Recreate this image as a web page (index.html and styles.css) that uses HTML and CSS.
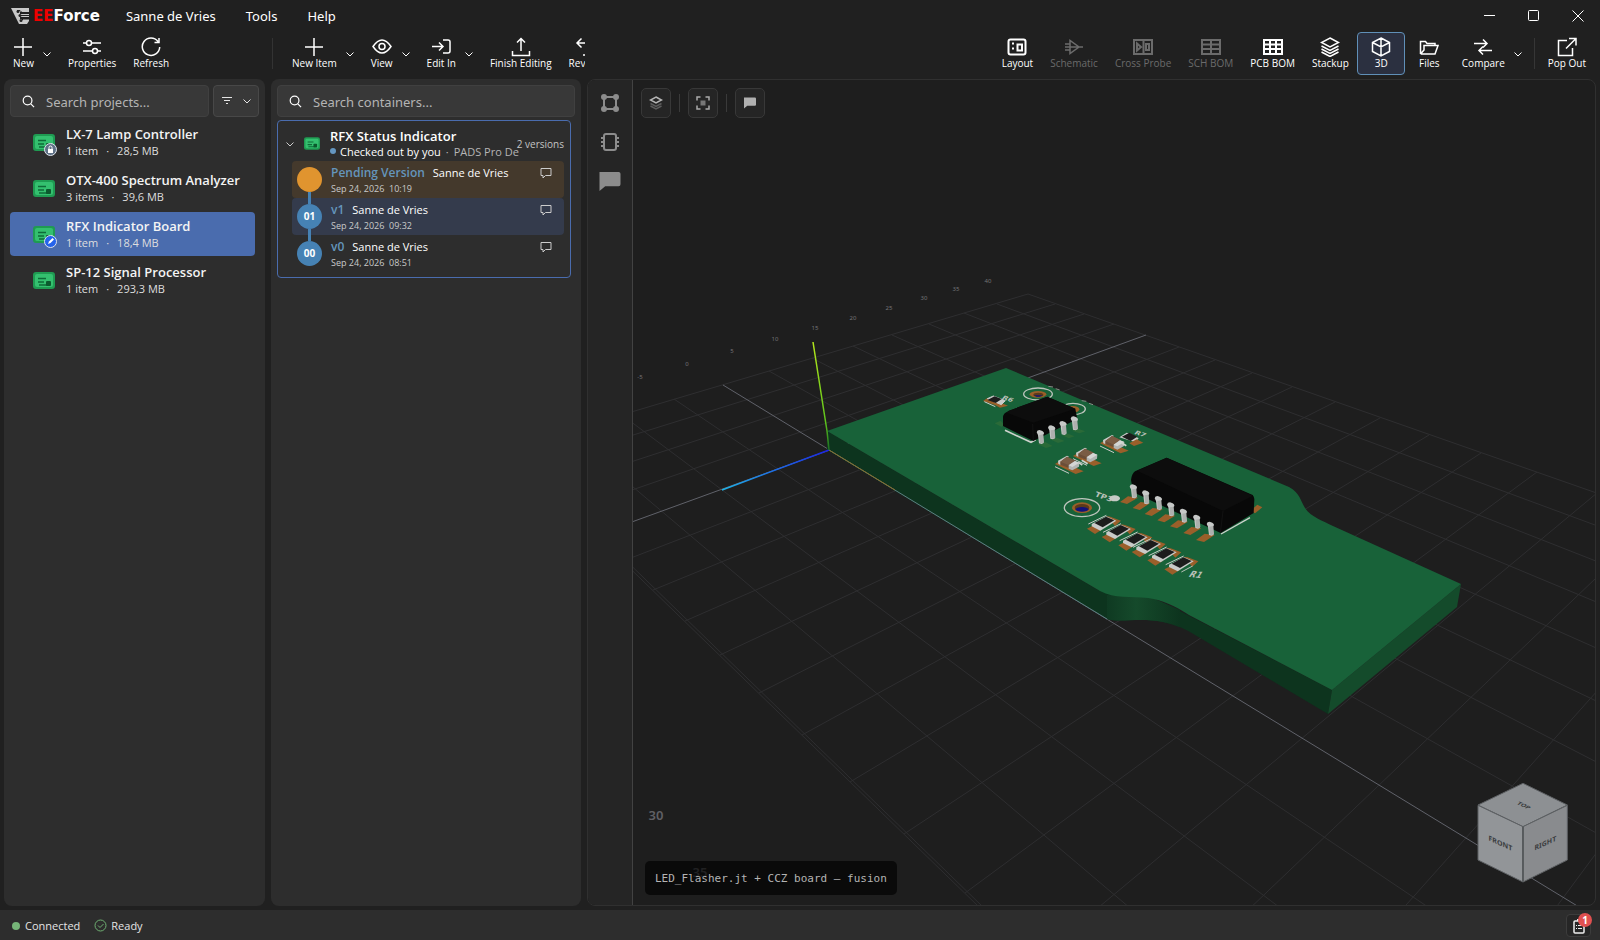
FILE: index.html
```html
<!DOCTYPE html>
<html lang="en">
<head>
<meta charset="utf-8">
<title>EEForce</title>
<link rel="stylesheet" href="styles.css">
</head>
<body>
<svg class="defs" aria-hidden="true">
  <symbol id="plus" viewBox="0 0 20 20"><path d="M10 1v18M1 10h18"/></symbol>
  <symbol id="chevron" viewBox="0 0 10 10"><path d="M1.500 3.500 5 7l3.500-3.500"/></symbol>
  <symbol id="search" viewBox="0 0 14 14"><circle cx="6" cy="6" r="4.700"/><path d="m9.500 9.500 3.500 3.500"/></symbol>
  <symbol id="comment" viewBox="0 0 12 12"><path d="M1 1.500h10v7H5.500L3 11V8.500H1z"/></symbol>
  <symbol id="comment-solid" viewBox="0 0 22 22"><path d="M2 1h18q2 0 2 2v11q0 2-2 2H6l-6 5V1z"/></symbol>
  <symbol id="board" viewBox="0 0 22 17"><rect width="22" height="17" rx="3" fill="#1f9b52"/><rect x="2" y="2" width="18" height="13" rx="2" fill="#34c06f"/><path d="M5 6.500h8M5 10h6M6 13h8" stroke="#0e6b38" stroke-width="1.500"/><rect x="13" y="9" width="5" height="5" rx="1" fill="#0b5a2e"/></symbol>
  <symbol id="layers" viewBox="0 0 20 20"><path d="m10 1 8.500 4.500L10 10 1.500 5.500zM1.500 9l8.500 4.500L18.500 9M1.500 12l8.500 4.500 8.500-4.500M1.500 15l8.500 4.500 8.500-4.500"/></symbol>
</svg>

<header class="titlebar">
  <div class="brand">
    <svg width="20" height="18" viewBox="0 0 20 18"><path d="M0 1h18v4H9v2h9v3H9v2h9v2l-2 3H8z" fill="#c8c8c8"/><path d="M6 3.500h3l2 2h7M9 8.500h9M10 14l2-2h6" stroke="#222" fill="none"/><circle cx="7" cy="4.500" r="1.500" fill="#222"/><circle cx="9" cy="8.500" r="1.500" fill="#222"/><circle cx="10" cy="13.500" r="1.500" fill="#222"/></svg>
    <span class="brand-name"><b>EE</b>Force</span>
  </div>
  <nav class="menu"><button>Sanne de Vries</button><button>Tools</button><button>Help</button></nav>
  <div class="window-controls">
    <button aria-label="Minimize"><svg width="12" height="12" viewBox="0 0 12 12"><path d="M0 5.500h11"/></svg></button>
    <button aria-label="Maximize"><svg width="12" height="12" viewBox="0 0 12 12"><rect x=".5" y=".5" width="10" height="10" rx="1"/></svg></button>
    <button aria-label="Close"><svg width="12" height="12" viewBox="0 0 12 12"><path d="m.5.5 11 11m0-11-11 11"/></svg></button>
  </div>
</header>

<div class="toolbar">
  <div class="tools tools-projects">
    <div class="split"><button class="tool"><svg class="icon"><use href="#plus"/></svg>New</button><button class="more" aria-label="New options"><svg><use href="#chevron"/></svg></button></div>
    <button class="tool"><svg class="icon" viewBox="0 0 20 20"><path d="M1 6h3.500m5 0H19M1 14h9.500m5 0H19"/><circle cx="7" cy="6" r="2.500"/><circle cx="13" cy="14" r="2.500"/></svg>Properties</button>
    <button class="tool"><svg class="icon" viewBox="0 0 20 20"><path d="M17 4.500A8.700 8.700 0 1 0 18.700 10M18 1v4.500h-4.500"/></svg>Refresh</button>
  </div>
  <div class="tools tools-items">
    <div class="split"><button class="tool"><svg class="icon"><use href="#plus"/></svg>New Item</button><button class="more" aria-label="New item options"><svg><use href="#chevron"/></svg></button></div>
    <div class="split"><button class="tool"><svg class="icon" viewBox="0 0 20 20"><path d="M1 9.500Q10-3.500 19 9.500 10 22.500 1 9.500z"/><circle cx="10" cy="9.500" r="3"/></svg>View</button><button class="more" aria-label="View options"><svg><use href="#chevron"/></svg></button></div>
    <div class="split"><button class="tool"><svg class="icon" viewBox="0 0 20 20"><path d="M1 9.500h11M8 5.500l4 4-4 4M12 3h5q2 0 2 2v9q0 2-2 2h-5"/></svg>Edit In</button><button class="more" aria-label="Edit options"><svg><use href="#chevron"/></svg></button></div>
    <button class="tool"><svg class="icon" viewBox="0 0 20 20"><path d="M10 14V1.500M6 5.500l4-4 4 4M1.500 14v4.500h17V14"/></svg>Finish Editing</button>
    <button class="tool"><svg class="icon" viewBox="0 0 20 20"><path d="M17 6H3m4.500-4.500L3 6l4.500 4.500M9 18h7"/></svg>Revert</button>
  </div>
  <div class="tools tools-views">
    <button class="tool"><svg class="icon bold" viewBox="0 0 20 20"><rect x="1.500" y="2.500" width="17" height="15" rx="2"/><rect x="10.500" y="7.500" width="4.500" height="6"/><path d="M5 6.500h2M5 11.500h2"/></svg>Layout</button>
    <button class="tool" disabled><svg class="icon" viewBox="0 0 20 20"><path d="M6 3.500v13L15 10zM1 7h5M1 13h5M1 10h18"/></svg>Schematic</button>
    <button class="tool" disabled><svg class="icon bold" viewBox="0 0 20 20"><path d="M1 3h18v14H1zM10.500 3v14M4 6.500v7L8 10z"/><rect x="13" y="7" width="3" height="6"/></svg>Cross Probe</button>
    <button class="tool" disabled><svg class="icon bold" viewBox="0 0 20 20"><path d="M1 3h18v14H1zM1 7.500h18M1 12h18M10 3v14"/></svg>SCH BOM</button>
    <button class="tool"><svg class="icon bold" viewBox="0 0 20 20"><path d="M1 3h18v14H1zM1 7.500h18M1 12h18M7 3v14M13 3v14"/></svg>PCB BOM</button>
    <button class="tool"><svg class="icon"><use href="#layers"/></svg>Stackup</button>
    <button class="tool selected" aria-pressed="true"><svg class="icon" viewBox="0 0 20 20"><path d="m10 1 8.500 4.500v9L10 19l-8.500-4.500v-9zM1.500 5.500 10 10l8.500-4.500M10 10v9M10 1v9"/></svg>3D</button>
    <button class="tool"><svg class="icon" viewBox="0 0 20 20"><path d="M1.500 17V4.500h5l1.500 2h8v2M1.500 17H16l3-8.500H16V6.500M1.500 17 5 13V8.500h14"/></svg>Files</button>
    <div class="split"><button class="tool"><svg class="icon" viewBox="0 0 20 20"><path d="M1 6.500h13M10 2.500l4 4-4 4M19 13.500H6m4-4-4 4 4 4"/></svg>Compare</button><button class="more" aria-label="Compare options"><svg><use href="#chevron"/></svg></button></div>
    <span class="rule"></span>
    <button class="tool"><svg class="icon" viewBox="0 0 20 20"><path d="M10 3.500H1.500v15h14V11M12 1.500h7v7M19 1.500 9 11.500"/></svg>Pop Out</button>
  </div>
</div>

<main class="workspace">
  <section class="panel" aria-label="Projects">
    <div class="search-row">
      <label class="search"><svg><use href="#search"/></svg><input type="search" placeholder="Search projects..." aria-label="Search projects"></label>
      <button class="filter" aria-label="Filter"><svg width="12" height="12" viewBox="0 0 12 12"><path d="M1 2.500h10M3 5.500h6M5 8.500h2"/></svg><svg width="10" height="10"><use href="#chevron"/></svg></button>
    </div>
    <ul class="projects">
      <li><button class="project"><span class="project-icon"><svg width="22" height="17"><use href="#board"/></svg><svg class="mark" width="13" height="13" viewBox="0 0 13 13"><circle cx="6.500" cy="6.500" r="6" fill="#5f7186" stroke="#dfe5ec"/><rect x="4" y="6" width="5" height="4" fill="#fff"/><path d="M5 6V4.500a1.500 1.500 0 0 1 3 0V6" stroke="#fff" fill="none"/></svg></span><span><strong>LX-7 Lamp Controller</strong><small>1 item<i>·</i>28,5 MB</small></span></button></li>
      <li><button class="project"><span class="project-icon"><svg width="22" height="17"><use href="#board"/></svg></span><span><strong>OTX-400 Spectrum Analyzer</strong><small>3 items<i>·</i>39,6 MB</small></span></button></li>
      <li><button class="project current"><span class="project-icon"><svg width="22" height="17"><use href="#board"/></svg><svg class="mark" width="13" height="13" viewBox="0 0 13 13"><circle cx="6.500" cy="6.500" r="6" fill="#2563eb" stroke="#dfe5ec"/><path d="m4 9 1-2.500L8.500 3 10 4.500 6.500 8z" fill="#fff"/></svg></span><span><strong>RFX Indicator Board</strong><small>1 item<i>·</i>18,4 MB</small></span></button></li>
      <li><button class="project"><span class="project-icon"><svg width="22" height="17"><use href="#board"/></svg></span><span><strong>SP-12 Signal Processor</strong><small>1 item<i>·</i>293,3 MB</small></span></button></li>
    </ul>
  </section>

  <section class="panel" aria-label="Containers">
    <label class="search"><svg><use href="#search"/></svg><input type="search" placeholder="Search containers..." aria-label="Search containers"></label>
    <article class="container-card">
      <header>
        <button class="collapse" aria-label="Collapse"><svg width="10" height="10"><use href="#chevron"/></svg></button>
        <svg width="16" height="13"><use href="#board"/></svg>
        <div class="container-text"><h2>RFX Status Indicator</h2><p><span class="dot"></span>Checked out by you<em>·</em><em>PADS Pro Designer</em></p></div>
        <span class="count">2 versions</span>
      </header>
      <ol class="versions">
        <li class="pending"><span class="node"></span><div><p><b>Pending Version</b>Sanne de Vries</p><time>Sep 24, 2026&nbsp; 10:19</time></div><button aria-label="Comments"><svg width="12" height="12"><use href="#comment"/></svg></button></li>
        <li class="active"><span class="node">01</span><div><p><b>v1</b>Sanne de Vries</p><time>Sep 24, 2026&nbsp; 09:32</time></div><button aria-label="Comments"><svg width="12" height="12"><use href="#comment"/></svg></button></li>
        <li><span class="node">00</span><div><p><b>v0</b>Sanne de Vries</p><time>Sep 24, 2026&nbsp; 08:51</time></div><button aria-label="Comments"><svg width="12" height="12"><use href="#comment"/></svg></button></li>
      </ol>
    </article>
  </section>

  <section class="viewer" aria-label="3D view">
    <nav class="rail">
      <button aria-label="Nets"><svg width="20" height="20" viewBox="0 0 20 20"><path d="M4 4h12v12H4z" fill="none" stroke="#8c8c8c" stroke-width="2"/><g fill="#8c8c8c"><circle cx="4" cy="4" r="3"/><circle cx="16" cy="4" r="3"/><circle cx="4" cy="16" r="3"/><circle cx="16" cy="16" r="3"/></g></svg></button>
      <button aria-label="Components"><svg width="20" height="20" viewBox="0 0 20 20"><g fill="none" stroke="#8c8c8c" stroke-width="2"><rect x="4" y="2" width="12" height="16" rx="2"/><path d="M1 6h3M1 10h3M1 14h3M16 6h3M16 10h3M16 14h3"/></g></svg></button>
      <button aria-label="Comments"><svg width="22" height="21" fill="#8c8c8c"><use href="#comment-solid"/></svg></button>
    </nav>
    <div class="viewport">
      <svg class="scene" viewBox="633 80 962 825" preserveAspectRatio="xMidYMid slice" role="img" aria-label="Circuit board in perspective">
        <g fill="none" stroke="#2e2e30">
          <path d="M1028 294 1808 567M997 304 1787 596M964 313 1764 627M929 324 1738 661M892 335 1711 699M853 346 1680 741M812 358 1645 787M769 371 1607 839M674 399 1514 965M622 415 1458 1041M567 431 1392 1130M507 449 1316 1234M511 449 1320 1234"/>
          <path d="M1028 294 507 449M1055 304 527 468M1084 314 548 489M1114 324 571 511M1179 347 623 561M1215 360 653 590M1252 373 685 621M1292 387 720 655M1335 402 759 693M1380 418 802 735M1429 435 850 782M1481 453 904 834M1537 472 965 893M1597 493 1034 961M1661 516 1114 1038M1731 541 1207 1128M1808 567 1315 1233"/>
        </g>
        <path d="M723 385 1620 932M1146 335 596 535" fill="none" stroke="#60626a"/>
        <g class="ticks">
          <text x="640" y="379">-5</text><text x="687" y="366">0</text><text x="732" y="353">5</text><text x="775" y="341">10</text><text x="815" y="330">15</text><text x="853" y="320">20</text><text x="889" y="310">25</text><text x="924" y="300">30</text><text x="956" y="291">35</text><text x="988" y="283">40</text>
          <text class="near" x="656" y="820">30</text><text class="near" x="700" y="877">35</text>
        </g>
        <path d="M827 431v19L1107 619C1120 623 1140 617 1163 622 1175 625 1183 628 1190 632L1328 714 1332 690 1178 610 1098 590z" fill="#0d341e"/>
        <path d="M1107 595v24C1120 623 1140 617 1163 622 1170 623 1175 625 1180 627V610L1148 596z" fill="url(#bend)"/>
        <path d="m1332 690-4 24 129-107 4-23z" fill="#144b2b"/>
        <path d="M827 431 1006 368 1289 487C1300 493 1300 500 1305 508 1311 517 1323 521 1333 526L1461 584 1332 690 1189 615C1175 606 1163 600 1148 598 1130 596 1115 599 1100 591z" fill="#186239"/>
        <path d="M829 450 1107 619" stroke="#5d7f82" fill="none"/>
        <path d="m829 450 66 40" stroke="#8a6a28" fill="none"/>
        <path d="m829 450-107 40" stroke="url(#blue)" stroke-width="1.500"/>
        <path d="m813 342 14 89 2 19" stroke="url(#lime)" fill="none" stroke-width="1.500"/>
        <defs>
          <linearGradient id="bend"><stop stop-color="#0f3a22"/><stop offset=".4" stop-color="#154a2b"/><stop offset="1" stop-color="#0d341e"/></linearGradient>
          <linearGradient id="blue" x1="1" x2="0"><stop stop-color="#1a22e6"/><stop offset="1" stop-color="#1cb4e8"/></linearGradient>
          <linearGradient id="lime" x1="0" x2="0" y1="0" y2="1"><stop stop-color="#b4e61c"/><stop offset=".75" stop-color="#5cc41c"/><stop offset="1" stop-color="#1d6a22"/></linearGradient>
          <g id="res"><path d="m-50 18 20-10 26 12-22 14zM8-20l12 2 32 12-18 16z" fill="#9a5f2a"/><path d="m-46 4 54-26" stroke="#c9cbc9" stroke-width="3"/><path d="M-36 4 8-19l30 13-48 30-26-13z" fill="#c9cbc9"/><path d="m-28 1 35-19 25 11-35 21z" fill="#1c1c1c"/></g>
          <g id="cap"><path d="m-38 4 16-10 70 32-24 8zM-38 4l10-6 10 8z" fill="#9a5f2a"/><path d="m-38 12 42 20" stroke="#c9cbc9" stroke-width="3"/><path d="m-29-6 27-15 6 3-25 15V7l-7-3z" fill="#c6c8c6"/><path d="m-22-3 20-15L24-6 4 8v8L-22 6z" fill="#6b4e38"/><path d="m-22-3 20-15L24-6 4 8z" fill="#7a5c44"/><path d="m3 8 19-13 13 5-1 12-20 11-11-5z" fill="#b2b5b3"/><path d="m3 8 19-13 13 5-21 13z" fill="#d4d6d4"/></g>
          <g id="pin"><path d="M-11-8q1-7 9-7l8 3q6 3 5 8l-4 5 3 23-6 3-8-2-3-25z" fill="#c6c8c7"/><path d="M-3 0 9-2l2 24-6 3-7-2z" fill="#adb0ae"/></g>
        </defs>
        <svg x="960" y="350" width="340" height="240" viewBox="0 0 1020 720">
          <g fill="none" stroke="#bcc4bc" stroke-width="4"><ellipse cx="234" cy="132" rx="43" ry="18"/><ellipse cx="339" cy="177" rx="37" ry="17"/><ellipse cx="366" cy="473" rx="53" ry="27"/></g>
          <ellipse cx="234" cy="133" rx="25" ry="10" fill="#9a5f2a"/><ellipse cx="235" cy="134" rx="15" ry="6" fill="#5b3a1a"/><path d="M222 136h26l-10 4h-8z" fill="#12127a"/>
          <ellipse cx="339" cy="178" rx="19" ry="10" fill="#9a5f2a"/>
          <ellipse cx="366" cy="473" rx="30" ry="16" fill="#9a5f2a"/><ellipse cx="366" cy="473" rx="22" ry="11" fill="#5b3a1a"/><ellipse cx="366" cy="478" rx="19" ry="7" fill="#12127a"/>
          <path d="m265 109 14 2m8 5 12 4M365 152l14 2m8 6 12 4" stroke="#858b85" stroke-width="3"/>
          <path d="m69 153 12-8 20 4 43 18-24 6-15-8z" fill="#9a5f2a"/><path d="m73 155 33 15M82 146l18-8 36 14-12 12z" stroke="#c9cbc9" stroke-width="3" fill="#c9cbc9"/><path d="m82 150 22-11 21 8-18 12z" fill="#1c1c1c"/>
          <text class="silk" transform="matrix(.9 .3 -.5 .6 124 146)">R6</text>
          <path d="m104 220 18-8 12 14-10 4zM232 282l24-6 22 12-20 6zm38-14 20-5 24 10-20 6zm36-12 18-5 20 8-18 6zm30-14 18-6 22 8-18 6z" fill="#2a6a38"/>
          <path d="M135 241 213 277l14-8" stroke="#cdd2cd" stroke-width="5" fill="none"/>
          <path d="M129 200q0-10 18-18l115-42 84 36 6 31-132 66-91-45z" fill="#080808"/><path d="M147 182 262 140l84 36-126 42-80-30z" fill="#0d0d0d"/><path d="m218 222 2 50" stroke="#161616" stroke-width="2"/>
          <use href="#pin" x="241" y="255"/><use href="#pin" x="275" y="241"/><use href="#pin" x="309" y="228"/><use href="#pin" x="343" y="214"/>
          <path d="m478 262 22-14 10 3 26 14-10 12z" fill="#c9cbc9"/><path d="m508 280 14 8 28-10-20-10z" fill="#9a5f2a"/><path d="m486 260 22-12 24 12-20 13z" fill="#1c1c1c"/>
          <use href="#cap" x="377" y="314"/><use href="#cap" x="323" y="338"/><use href="#cap" x="458" y="276"/>
          <path d="m355 337 12 8m-2-14 18 10M485 279l14 8" stroke="#cdd2cd" stroke-width="5"/>
          <text class="silk" transform="matrix(.9 .3 -.5 .6 521 251)">R7</text>
          <text class="silk" transform="matrix(1 .36 -.4 .8 403 438)">TP3</text><ellipse cx="464" cy="445" rx="16" ry="9" fill="#c5cac5"/>
          <path d="M783 552 870 503" stroke="#cdd2cd" stroke-width="4"/><path d="m872 482 20-18 15 8-22 18z" fill="#9a5f2a"/>
          <path d="M513 390q2-18 12-26l95-41 258 112q4 4 5 12l-2 42-99 60-262-122z" fill="#080808"/><path d="M531 362 620 323l259 114-90 46z" fill="#0d0d0d"/><path d="m789 483-8 66" stroke="#171717" stroke-width="2"/>
          <path d="m480 456 24-17 30 4-33 19zm38 18 24-18 28 4-31 20zm36 18 24-18 30 4-33 20zm38 19 24-18 30 4-33 20zm38 18 24-18 30 4-33 20zm40 20 24-18 30 4-33 20zm38 21 26-19 30 4-32 21z" fill="#9a5f2a"/>
          <use href="#pin" x="520" y="418"/><use href="#pin" x="557" y="436"/><use href="#pin" x="595" y="453"/><use href="#pin" x="632" y="472"/><use href="#pin" x="670" y="491"/><use href="#pin" x="710" y="509"/><use href="#pin" x="751" y="530"/>
          <use href="#res" x="431" y="518"/><use href="#res" x="475" y="543"/><use href="#res" x="525" y="568"/><use href="#res" x="565" y="588"/><use href="#res" x="612" y="613"/><use href="#res" x="663" y="640"/>
          <path d="m664 666 34-18" stroke="#b8c0b8" stroke-width="3"/>
          <text class="silk large" transform="matrix(.9 .1 -.6 .9 684 680)">R1</text>
        </svg>
      </svg>

      <div class="view-tools">
        <button aria-label="Layers"><svg width="14" height="14" viewBox="0 0 14 14" fill="none" stroke-width="1.500"><path d="m1.500 7.500 5.500 3 5.500-3M1.500 10l5.500 3 5.500-3" stroke="#5c5c5c"/><path d="m7 1 5.500 3L7 7 1.500 4z" stroke="#b4b4b4"/></svg></button><span></span>
        <button aria-label="Fit to view"><svg width="14" height="14" viewBox="0 0 14 14"><path d="M1 4.500V1h3.500m5 0H13v3.500m0 5V13H9.500m-5 0H1V9.500" fill="none" stroke="#aaa" stroke-width="1.500"/><rect x="4.500" y="4.500" width="5" height="5" fill="#777"/></svg></button><span></span>
        <button aria-label="Comments"><svg width="12" height="12" fill="#b0b0b0"><use href="#comment-solid"/></svg></button>
      </div>
      <p class="caption">LED_Flasher.jt + CCZ board — fusion</p>
      <svg class="cube" width="92" height="102" viewBox="112 68 276 304" role="img" aria-label="Orientation cube">
        <g stroke="#5d6063" stroke-width="3" stroke-linejoin="round"><path d="m250 71 133 65-133 65-135-65z" fill="#8d9093"/><path d="m115 137 135 64v166l-135-66z" fill="#929598"/><path d="m383 137-133 64v166l133-66z" fill="#898b8e"/></g>
        <path d="M250 201v164" stroke="#54575a" stroke-width="5"/>
        <g class="cube-face"><text transform="matrix(1 .45 0 1 182 258)">FRONT</text><text transform="matrix(1 -.45 0 1 317 258)">RIGHT</text><text class="top" transform="matrix(.9 .4 -.6 .5 248 141)">TOP</text></g>
      </svg>
    </div>
  </section>
</main>

<footer class="status">
  <span class="online"></span><span>Connected</span>
  <svg width="13" height="13" viewBox="0 0 13 13"><circle cx="6.500" cy="6.500" r="5.500"/><path d="m4 6.500 2 2 3.500-3.500"/></svg><span>Ready</span>
  <button aria-label="Tasks, 1 new"><svg width="14" height="16" viewBox="0 0 14 16"><rect x="2" y="3" width="10" height="12" rx="1" fill="none" stroke="#eee" stroke-width="1.500"/><path d="M5 2h4" stroke="#eee" stroke-width="2"/><path d="M4 7.500h1m1 0h4M4 10.500h1m1 0h4" stroke="#eee"/></svg><span class="badge">1</span></button>
</footer>
</body>
</html>
```
FILE: styles.css
```css
* { box-sizing: border-box; }
body {
  margin: 0;
  height: 100vh;
  display: flex;
  flex-direction: column;
  overflow: hidden;
  background: #202020;
  color: #fff;
  font: 12px/16px "Open Sans", "Noto Sans", sans-serif;
}
button { border: 0; padding: 0; background: none; color: inherit; font: inherit; }
svg { display: block; flex: none; }
ul, ol, p, h2 { margin: 0; padding: 0; list-style: none; }
.defs { position: absolute; width: 0; height: 0; }

.titlebar { display: flex; align-items: center; height: 32px; padding-left: 11px; }
.brand { display: flex; align-items: center; gap: 2px; }
.brand-name { font: 700 15px/20px "DejaVu Sans", sans-serif; }
.brand-name b { color: #f00000; }
.menu { display: flex; gap: 30px; margin-left: 26px; font: 13px/20px "Noto Sans", sans-serif; }
.window-controls { display: flex; margin-left: auto; }
.window-controls button { width: 44px; height: 32px; display: grid; place-items: center; }
.window-controls svg { fill: none; stroke: #fff; }

.toolbar { display: grid; grid-template-columns: 272px 313px minmax(0, 1fr); height: 47px; padding-bottom: 4px; }
.tools { display: flex; align-items: center; overflow: hidden; }
.tools-projects { padding-left: 4px; }
.tools-items { position: relative; padding-left: 11px; }
.tools-items::before { content: ""; position: absolute; left: 0; top: 6px; width: 1px; height: 31px; background: #333; }
.tools-views { justify-content: flex-end; padding-right: 6px; }
.tool {
  flex: none;
  display: flex;
  flex-direction: column;
  align-items: center;
  justify-content: center;
  min-width: 38px;
  height: 43px;
  padding: 0 7px 0 8px;
  border: 1px solid transparent;
  border-radius: 4px;
  font-size: 10px;
  line-height: 13px;
  white-space: nowrap;
}
.tools-views > .tool { min-width: 48px; }
.tool:disabled { color: #6b6b6b; }
.tool.selected { background: #2b3040; border-color: #6090b8; }
.icon { width: 20px; height: 20px; fill: none; stroke: currentColor; stroke-width: 1.5; }
.icon.bold { stroke-width: 2; }
.split { display: flex; flex: none; }
.split .tool { padding-right: 0; min-width: 0; }
.more { width: 24px; display: grid; place-items: center; }
.more svg { width: 10px; height: 10px; fill: none; stroke: #fff; }
.rule { width: 1px; height: 31px; margin: 0 4px; background: #363636; }

.workspace { flex: 1; min-height: 0; display: grid; grid-template-columns: 261px 310px minmax(0, 1fr); gap: 6px; padding: 0 4px 4px; }
.panel { min-width: 0; padding: 6px; border-radius: 8px; background: #2d2d2d; }
.search-row { display: flex; gap: 4px; }
.search { flex: 1; min-width: 0; display: flex; align-items: center; gap: 11px; height: 32px; padding: 0 11px; border: 1px solid #404040; border-radius: 4px; background: #383838; }
.search svg { width: 13px; height: 13px; fill: none; stroke: #fff; stroke-width: 1.3; }
.search input { flex: 1; min-width: 0; padding: 2px 0 0; border: 0; outline: 0; background: none; color: #fff; font: 13px/20px "Noto Sans", sans-serif; }
.search input::placeholder { color: #b4b4b4; opacity: 1; }
.filter { flex: none; display: flex; align-items: center; justify-content: center; gap: 9px; width: 46px; border: 1px solid #484848; border-radius: 4px; background: #383838; }
.filter svg { fill: none; stroke: #e4e4e4; }

.projects { display: grid; gap: 2px; margin-top: 3px; padding-right: 4px; }
.project { display: flex; gap: 11px; align-items: center; width: 100%; height: 44px; padding-left: 23px; border-radius: 4px; text-align: left; }
.project.current { background: #4a6cae; }
.project-icon { position: relative; }
.mark { position: absolute; right: -2px; bottom: -5px; }
.project strong { display: block; font-size: 13px; line-height: 17px; font-weight: 600; color: #f4f4f4; }
.project small { display: block; font-size: 11px; line-height: 16px; color: #dedede; }
.project i { margin: 0 8px; font-style: normal; }

.container-card { margin: 3px 4px 0 0; padding: 5px 6px; border: 1px solid #4a6cae; border-radius: 4px; }
.container-card header { display: flex; align-items: center; height: 35px; }
.collapse { width: 12px; margin-right: 8px; display: grid; place-items: center; }
.collapse svg { fill: none; stroke: #ccc; }
.container-text { flex: 1; min-width: 0; margin-left: 10px; overflow: hidden; white-space: nowrap; }
.container-text h2 { font-size: 13px; line-height: 16px; font-weight: 600; }
.container-text p { font-size: 11px; line-height: 16px; }
.container-text em { font-style: normal; color: #b5b5b5; margin-left: 5px; }
.dot { display: inline-block; width: 6px; height: 6px; margin-right: 4px; border-radius: 50%; background: #6496c0; vertical-align: 2px; }
.count { margin-left: -2px; font-size: 10px; color: #c4c4c4; }
.versions { margin-left: 8px; }
.versions li { display: flex; align-items: center; gap: 9px; height: 37px; padding: 0 12px 0 5px; border-radius: 4px; }
.versions div { flex: 1; padding-top: 2px; white-space: nowrap; }
.versions p { font-size: 11px; line-height: 16px; }
.versions b { margin-right: 8px; font-size: 12px; font-weight: 600; color: #6495bb; }
.versions time { display: block; font-size: 9px; line-height: 15px; color: #cacaca; }
.versions li > button { align-self: flex-start; margin-top: 6px; }
.versions svg { fill: none; stroke: #ccc; }
.pending { background: #44392c; }
.active { background: #343b4c; }
.node { position: relative; width: 25px; height: 25px; border-radius: 50%; background: #4682b4; font-size: 10px; line-height: 25px; font-weight: 700; text-align: center; }
.pending .node { background: #e0942f; }
li + li .node::before { content: ""; position: absolute; left: 11px; top: -12px; width: 3px; height: 12px; background: #4682b4; }

.viewer { display: flex; min-width: 0; border: 1px solid #303030; border-radius: 8px; overflow: hidden; background: #1e1e1e; }
.rail { width: 45px; display: flex; flex-direction: column; align-items: center; gap: 19px; padding-top: 13px; border-right: 1px solid #424242; background: #252525; }
.viewport { flex: 1; min-width: 0; position: relative; }
.scene { position: absolute; inset: 0; width: 100%; height: 100%; }
.ticks text { font: 6px "Noto Sans", sans-serif; fill: #747476; text-anchor: middle; }
.ticks .near { font-size: 13px; font-weight: 600; fill: #606065; }
.silk { font: 700 24px "DejaVu Sans", sans-serif; fill: #b8c0b8; }
.silk.large { font-size: 28px; }
.view-tools { position: absolute; left: 8px; top: 8px; display: flex; align-items: center; gap: 8px; }
.view-tools button { display: grid; place-items: center; width: 30px; height: 30px; border: 1px solid #383838; border-radius: 5px; background: #252525; }
.view-tools span { width: 1px; height: 18px; background: #3a3a3a; }
.caption { position: absolute; left: 12px; bottom: 10px; padding: 11px 10px 9px; border-radius: 5px; background: rgba(0, 0, 0, .66); color: #b4b4b4; font: 11px/14px "DejaVu Sans Mono", monospace; }
.cube { position: absolute; right: 26px; bottom: 21px; }
.cube-face text { font: 700 21px "Noto Sans", sans-serif; fill: #3a3c3e; text-anchor: middle; }

.status { display: flex; align-items: center; height: 30px; padding: 1px 9px 0 12px; background: #2d2d2d; color: #e4e4e4; font-size: 11px; }
.status > svg { margin: 0 4px 0 14px; fill: none; stroke: #6fb072; }
.online { width: 8px; height: 8px; margin-right: 5px; border-radius: 50%; background: #76b578; }
.status button { position: relative; display: grid; place-items: center; width: 25px; height: 23px; margin-left: auto; border: 1px solid #3c3c3c; border-radius: 4px; background: #262626; }
.badge { position: absolute; right: -2px; top: -2px; width: 14px; height: 14px; border-radius: 50%; background: #e05050; color: #fff; font-size: 10px; font-weight: 700; line-height: 14px; }
```
